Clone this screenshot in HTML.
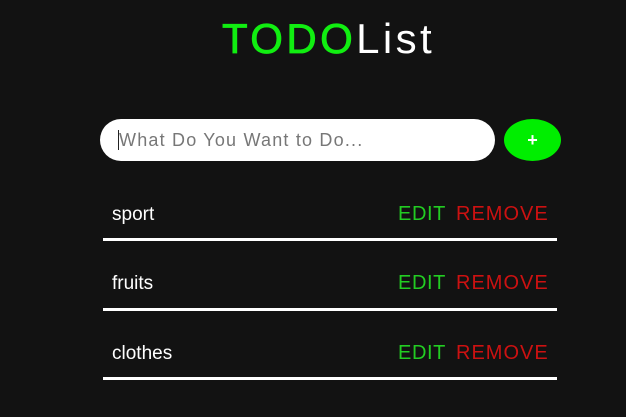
<!DOCTYPE html>
<html><head><style>
body{margin:0;width:626px;height:417px;background:#121212;font-family:"Liberation Sans",sans-serif;position:relative;overflow:hidden}
h1{position:absolute;left:222px;white-space:nowrap;top:15px;margin:0;font-size:42px;font-weight:normal;letter-spacing:3.4px;color:#fff;line-height:48px}
h1 span{color:#11ee11;-webkit-text-stroke:0.8px #11ee11}
.inp{position:absolute;left:100px;top:119px;width:395px;height:42px;border-radius:21px;background:#fff}
.inp span{position:absolute;left:19px;top:11px;font-size:18px;letter-spacing:1.2px;color:#777}
.inp i{position:absolute;left:18px;top:11px;width:1px;height:20px;background:#222}
.btn{position:absolute;left:504px;top:119px;width:57px;height:42px;border-radius:50%;background:#0e0;color:#fff;font-weight:bold;font-size:18px;text-align:center;line-height:42px}
.row{position:absolute;left:103px;width:454px;height:3px;background:#fff}
.t{position:absolute;left:112px;font-size:19px;color:#fff}
.e{position:absolute;left:398px;font-size:20px;letter-spacing:0.6px;color:#22cc22}
.r{position:absolute;left:456px;font-size:20px;letter-spacing:1px;color:#cc1111}
</style></head><body>
<h1><span>TODO</span>List</h1>
<div class="inp"><i></i><span>What Do You Want to Do...</span></div>
<div class="btn">+</div>
<div class="t" style="top:204px">sport</div><div class="e" style="top:203px">EDIT</div><div class="r" style="top:203px">REMOVE</div><div class="row" style="top:238px"></div>
<div class="t" style="top:273px">fruits</div><div class="e" style="top:272px">EDIT</div><div class="r" style="top:272px">REMOVE</div><div class="row" style="top:308px"></div>
<div class="t" style="top:343px">clothes</div><div class="e" style="top:342px">EDIT</div><div class="r" style="top:342px">REMOVE</div><div class="row" style="top:377px"></div>
</body></html>
